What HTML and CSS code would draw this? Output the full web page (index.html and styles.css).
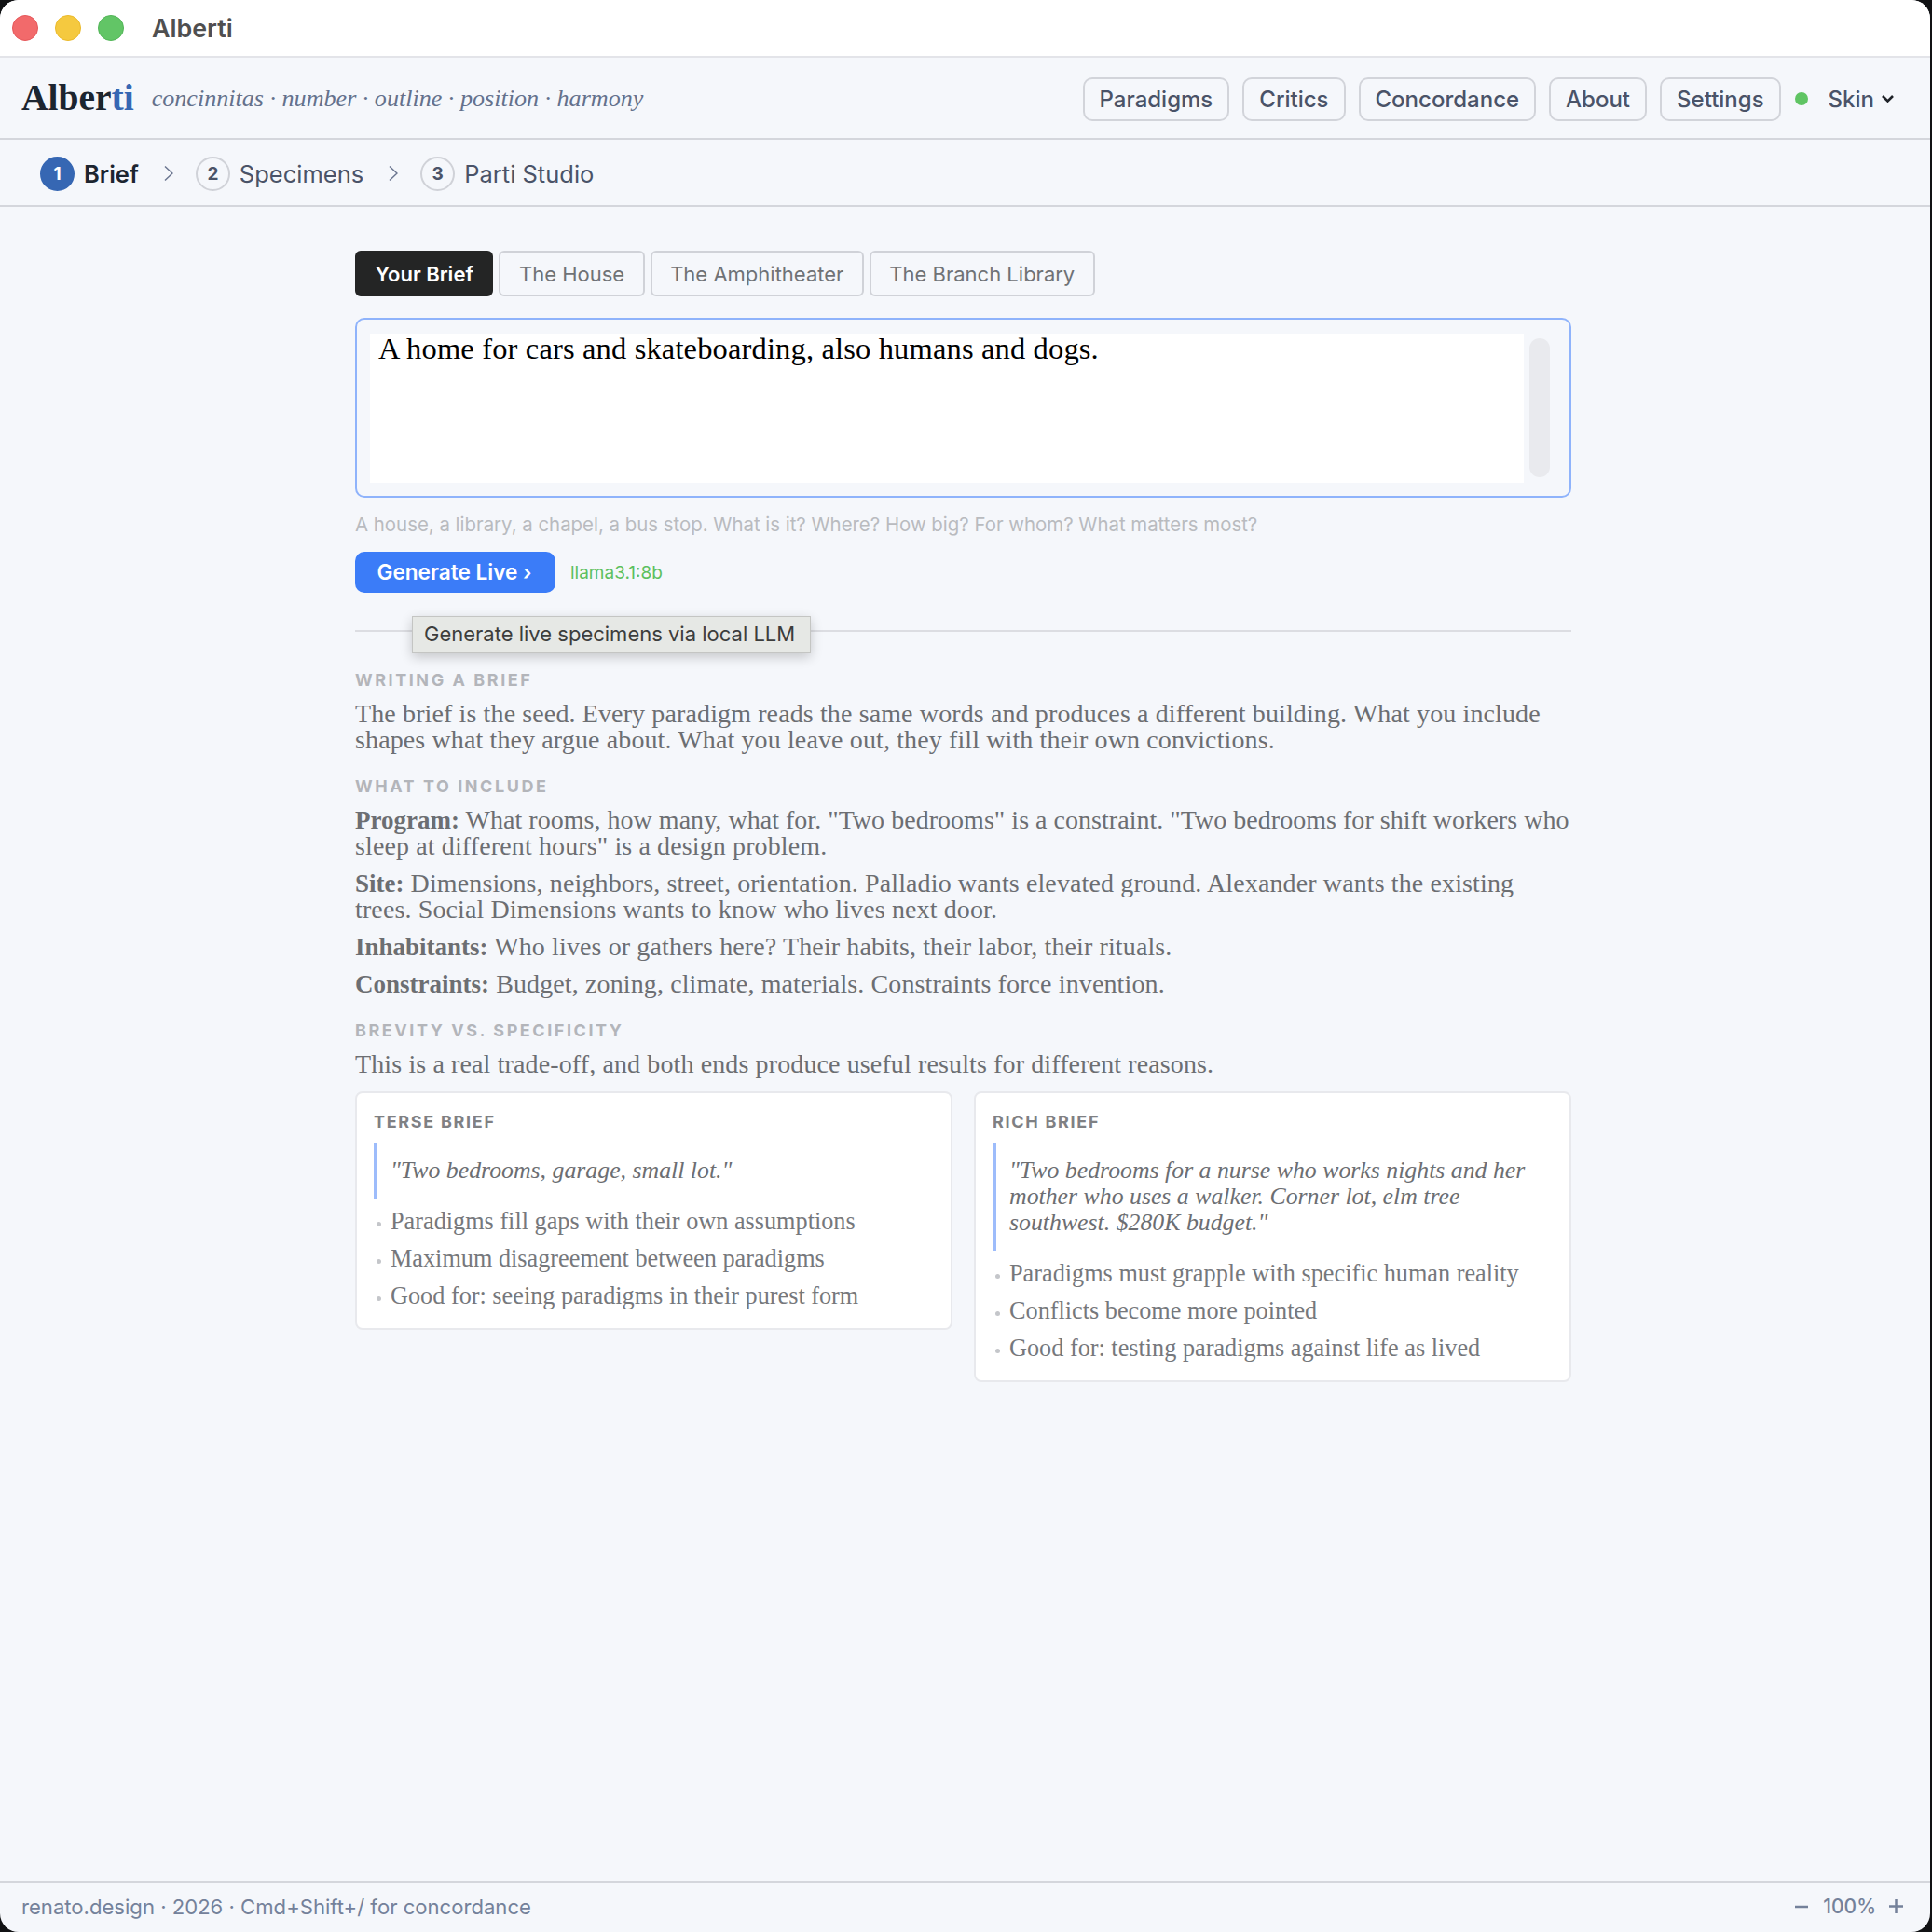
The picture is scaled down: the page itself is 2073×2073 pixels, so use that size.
FILE: index.html
```html
<!DOCTYPE html>
<html lang="en">
<head>
<meta charset="utf-8">
<title>Alberti</title>
<link rel="stylesheet" href="styles.css">
</head>
<body>
<div class="window">
  <div class="titlebar">
    <span class="light light-red"></span>
    <span class="light light-yellow"></span>
    <span class="light light-green"></span>
    <span class="window-title">Alberti</span>
  </div>
  <header class="header">
    <div class="logo">Alber<span class="logo-accent">ti</span></div>
    <div class="tagline">concinnitas · number · outline · position · harmony</div>
    <nav class="nav">
      <button class="nav-btn">Paradigms</button>
      <button class="nav-btn">Critics</button>
      <button class="nav-btn">Concordance</button>
      <button class="nav-btn">About</button>
      <button class="nav-btn">Settings</button>
      <span class="status-dot"></span>
      <span class="skin">Skin<svg class="skin-chev" width="15" height="10" viewBox="0 0 15 10"><path d="M2 2l5.5 5.5L13 2" fill="none" stroke="#1f2328" stroke-width="2.6"/></svg></span>
    </nav>
  </header>
  <div class="steps">
    <span class="step-num step-num-active">1</span><span class="step-label step-label-active">Brief</span>
    <svg class="step-chev" width="10" height="18" viewBox="0 0 10 18"><path d="M1 1.5L9 9l-8 7.500" fill="none" stroke="#6b7690" stroke-width="1.500"/></svg>
    <span class="step-num">2</span><span class="step-label">Specimens</span>
    <svg class="step-chev" width="10" height="18" viewBox="0 0 10 18"><path d="M1 1.5L9 9l-8 7.500" fill="none" stroke="#6b7690" stroke-width="1.500"/></svg>
    <span class="step-num">3</span><span class="step-label">Parti Studio</span>
  </div>
  <main class="main">
    <div class="content">
      <div class="tabs">
        <button class="tab tab-active">Your Brief</button>
        <button class="tab">The House</button>
        <button class="tab">The Amphitheater</button>
        <button class="tab">The Branch Library</button>
      </div>
      <div class="brief-box">
        <div class="brief-text">A home for cars and skateboarding, also humans and dogs.</div>
        <div class="brief-thumb"></div>
      </div>
      <p class="hint">A house, a library, a chapel, a bus stop. What is it? Where? How big? For whom? What matters most?</p>
      <div class="generate-row">
        <button class="generate">Generate Live ›</button>
        <span class="model">llama3.1:8b</span>
      </div>
      <div class="divider"><span class="tooltip">Generate live specimens via local LLM</span></div>

      <h3 class="label label-first">WRITING A BRIEF</h3>
      <p class="para">The brief is the seed. Every paradigm reads the same words and produces a different building. What you include<br>shapes what they argue about. What you leave out, they fill with their own convictions.</p>

      <h3 class="label">WHAT TO INCLUDE</h3>
      <p class="para para-tight"><strong>Program:</strong> What rooms, how many, what for. "Two bedrooms" is a constraint. "Two bedrooms for shift workers who<br>sleep at different hours" is a design problem.</p>
      <p class="para para-next"><strong>Site:</strong> Dimensions, neighbors, street, orientation. Palladio wants elevated ground. Alexander wants the existing<br>trees. Social Dimensions wants to know who lives next door.</p>
      <p class="para para-next"><strong>Inhabitants:</strong> Who lives or gathers here? Their habits, their labor, their rituals.</p>
      <p class="para para-next"><strong>Constraints:</strong> Budget, zoning, climate, materials. Constraints force invention.</p>

      <h3 class="label">BREVITY VS. SPECIFICITY</h3>
      <p class="para">This is a real trade-off, and both ends produce useful results for different reasons.</p>

      <div class="cards">
        <section class="card">
          <h4 class="card-label">TERSE BRIEF</h4>
          <blockquote class="quote">"Two bedrooms, garage, small lot."</blockquote>
          <ul class="points">
            <li>Paradigms fill gaps with their own assumptions</li>
            <li>Maximum disagreement between paradigms</li>
            <li>Good for: seeing paradigms in their purest form</li>
          </ul>
        </section>
        <section class="card">
          <h4 class="card-label">RICH BRIEF</h4>
          <blockquote class="quote">"Two bedrooms for a nurse who works nights and her<br>mother who uses a walker. Corner lot, elm tree<br>southwest. $280K budget."</blockquote>
          <ul class="points">
            <li>Paradigms must grapple with specific human reality</li>
            <li>Conflicts become more pointed</li>
            <li>Good for: testing paradigms against life as lived</li>
          </ul>
        </section>
      </div>
    </div>
  </main>
  <footer class="footer">
    <span class="footer-text">renato.design · 2026 · Cmd+Shift+/ for concordance</span>
    <span class="zoom">
      <svg width="14" height="14" viewBox="0 0 14 14"><path d="M0 7h14" stroke="#74819a" stroke-width="2.500"/></svg>
      <span class="zoom-value">100%</span>
      <svg width="15" height="15" viewBox="0 0 15 15"><path d="M0 7.500h15M7.500 0v15" stroke="#74819a" stroke-width="2.500"/></svg>
    </span>
  </footer>
</div>
</body>
</html>
```

FILE: styles.css
```css
* { box-sizing: border-box; }
html, body { margin: 0; padding: 0; background: #111214; }
body { width: 2073px; height: 2073px; overflow: hidden; font-family: Inter, "Liberation Sans", sans-serif; }
button { font-family: inherit; cursor: pointer; }

.window {
  width: 2071px;
  height: 2073px;
  background: #f5f7fb;
  border-radius: 20px;
  overflow: hidden;
  display: flex;
  flex-direction: column;
}

.titlebar {
  height: 62px;
  flex: none;
  background: #fff;
  border-bottom: 2px solid #e3e4e9;
  display: flex;
  align-items: center;
  padding-left: 13px;
}
.light { width: 28px; height: 28px; border-radius: 50%; margin-right: 18px; border: 1px solid; }
.light-red { background: #f26a6b; border-color: #e5575a; }
.light-yellow { background: #f5c93f; border-color: #eab92a; }
.light-green { background: #62c566; border-color: #52b558; margin-right: 0; }
.window-title { margin-left: 30px; font-size: 26.8px; font-weight: 600; color: #4f4f50; }

.header {
  height: 88px;
  flex: none;
  border-bottom: 2px solid #d4d6dc;
  display: flex;
  align-items: center;
  padding: 2px 38px 0 23px;
}
.logo { font-family: "Liberation Serif", serif; font-size: 39.5px; font-weight: 700; color: #1c2530; margin-top: -2px; }
.logo-accent { color: #3667b3; }
.tagline { margin-left: 19px; font-family: "Liberation Serif", serif; font-style: italic; font-size: 26.1px; color: #64718c; }
.nav { margin-left: auto; display: flex; align-items: center; }
.nav-btn {
  height: 47px;
  padding: 0 16px;
  margin-right: 14px;
  background: transparent;
  border: 2px solid #d2d4da;
  border-radius: 10px;
  font-size: 24px;
  font-weight: 500;
  color: #4a5368;
}
.status-dot { width: 14px; height: 14px; border-radius: 50%; background: #5fc463; margin-left: 1px; }
.skin { margin-left: 22px; font-size: 24px; font-weight: 500; color: #4a5368; display: flex; align-items: center; }
.skin-chev { margin-left: 7px; }

.steps {
  height: 72px;
  flex: none;
  border-bottom: 2px solid #d4d6dc;
  display: flex;
  align-items: center;
  padding: 2px 0 0 43px;
}
.step-num {
  width: 37px;
  height: 37px;
  border-radius: 50%;
  border: 2px solid #d0d2d8;
  display: flex;
  align-items: center;
  justify-content: center;
  font-size: 19px;
  font-weight: 700;
  color: #4a5368;
}
.step-num-active { background: #3667b3; border-color: #3667b3; color: #fff; }
.step-label { margin-left: 10px; font-size: 25.5px; color: #4a5368; }
.step-label-active { font-weight: 600; color: #1c2530; }
.step-chev { margin-left: 27px; margin-right: 24px; }

.main { flex: 1; min-height: 0; }
.content { width: 1305px; margin-left: 381px; padding-top: 47px; }

.tabs { display: flex; gap: 6px; height: 49px; }
.tab {
  height: 49px;
  padding: 0 19.5px;
  background: transparent;
  border: 2px solid #d0d2d8;
  border-radius: 6px;
  font-size: 22px;
  color: #6f7276;
}
.tab-active { background: #242525; border-color: #242525; color: #fff; font-weight: 600; }

.brief-box {
  margin-top: 23px;
  height: 193px;
  border: 2px solid #8fb3fb;
  border-radius: 10px;
  padding: 15px 21px 14px 14px;
  display: flex;
}
.brief-text {
  flex: 1;
  height: 160px;
  background: #fff;
  padding: 0 9px;
  font-family: "Liberation Serif", serif;
  font-size: 32.5px;
  letter-spacing: 0.15px;
  line-height: 32px;
  color: #000;
}
.brief-thumb { width: 22px; height: 149px; margin-top: 5px; margin-left: 6px; border-radius: 11px; background: #e9eaee; }

.hint { margin: 0; margin-top: 17px; height: 24px; line-height: 24px; font-size: 20.4px; color: #b9bbbf; }

.generate-row { margin-top: 17px; display: flex; align-items: center; height: 44px; }
.generate {
  width: 215px;
  height: 44px;
  border: 0;
  border-radius: 10px;
  background: #3b7cf8;
  color: #fff;
  font-size: 22.6px;
  font-weight: 600;
  padding: 0 2px 2px 0;
}
.model { margin-left: 16px; font-size: 19px; color: #5cc05f; }

.divider { position: relative; margin-top: 40px; height: 2px; background: #dcdde2; }
.tooltip {
  position: absolute;
  left: 61px;
  top: -15px;
  width: 428px;
  height: 40px;
  background: #e6e8e5;
  border: 1px solid #c4c5c3;
  box-shadow: 0 4px 12px rgba(0,0,0,0.2);
  font-size: 22px;
  line-height: 36px;
  padding-left: 12px;
  color: #3c3d3c;
}

.label {
  margin: 24px 0 10px;
  height: 24px;
  line-height: 24px;
  font-size: 18px;
  font-weight: 700;
  letter-spacing: 2.55px;
  color: #b3b5ba;
}
.label-first { margin-top: 40px; }

.para {
  margin: 0;
  font-family: "Liberation Serif", serif;
  font-size: 28px;
  letter-spacing: 0.12px;
  line-height: 28px;
  white-space: nowrap;
  color: #6c6e72;
}
.para strong { font-weight: 700; font-size: 27px; letter-spacing: 0; }
.para-next { margin-top: 12px; }
.para-tight::first-line { letter-spacing: 0.03px; }

.cards { margin-top: 15px; display: grid; grid-template-columns: 1fr 1fr; gap: 23px; align-items: start; }
.card {
  background: #fff;
  border: 2px solid #e8e9ed;
  border-radius: 8px;
  padding: 19px 18px 20px;
}
.card-label {
  margin: 0;
  height: 24px;
  line-height: 24px;
  font-size: 18px;
  font-weight: 700;
  letter-spacing: 1.7px;
  color: #7f8083;
}
.quote {
  margin: 10px 0 0;
  padding: 16px 0 16px 14px;
  border-left: 4px solid #9dbcfb;
  font-family: "Liberation Serif", serif;
  font-style: italic;
  font-size: 25.8px;
  line-height: 28px;
  color: #6c6e72;
}
.points { list-style: none; margin: 11px 0 0; padding: 0; display: flex; flex-direction: column; gap: 12px; }
.points li {
  position: relative;
  padding-left: 18px;
  font-family: "Liberation Serif", serif;
  font-size: 26.25px;
  line-height: 28px;
  color: #76787c;
}
.points li::before {
  content: "";
  position: absolute;
  left: 3px;
  top: 14px;
  width: 5px;
  height: 5px;
  border-radius: 50%;
  background: #c4c6ca;
}

.footer {
  height: 55px;
  flex: none;
  border-top: 2px solid #d4d6dc;
  display: flex;
  align-items: center;
  justify-content: space-between;
  padding: 0 29px 2px 23px;
  font-size: 22.1px;
  color: #74819a;
}
.zoom { display: flex; align-items: center; font-size: 21px; font-weight: 500; }
.zoom-value { margin: 0 14px 0 16px; }
```
